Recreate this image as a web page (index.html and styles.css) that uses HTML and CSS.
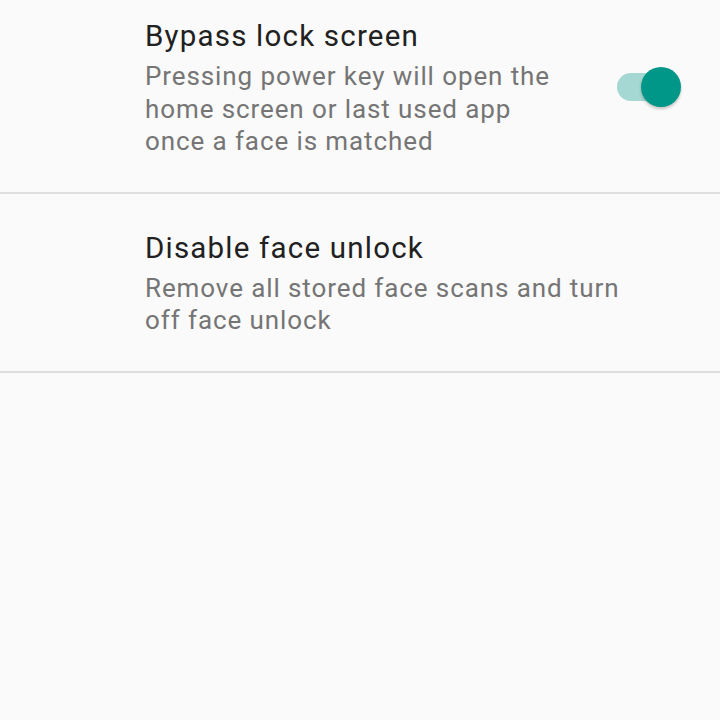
FILE: index.html
```html
<!DOCTYPE html>
<html lang="en">
<head>
    <meta charset="UTF-8">
    <meta name="viewport" content="width=device-width, initial-scale=1.0">
    <title>Face unlock</title>
    <link rel="stylesheet" href="styles.css">
</head>
<body>
    <div class="settings">
        <div class="pref pref-first">
            <div class="pref-text">
                <div class="pref-title">Bypass lock screen</div>
                <div class="pref-summary">Pressing power key will open the home screen or last used app once a face is matched</div>
            </div>
            <div class="switch on">
                <div class="switch-track"></div>
                <div class="switch-thumb"></div>
            </div>
        </div>
        <div class="pref">
            <div class="pref-text">
                <div class="pref-title">Disable face unlock</div>
                <div class="pref-summary">Remove all stored face scans and turn off face unlock</div>
            </div>
        </div>
    </div>
</body>
</html>
```

FILE: styles.css
```css
body {
    margin: 0;
    background-color: #fafafa;
    font-family: 'Roboto', 'Noto Sans', sans-serif;
    height: 100vh;
    overflow: hidden;
}

.settings {
    display: flex;
    flex-direction: column;
}

.pref {
    display: flex;
    align-items: center;
    padding: 34px 39px 34px 145px;
    border-bottom: 2px solid #dedede;
}

.pref-first {
    padding-top: 16px;
}

.pref-text {
    flex: 1;
    max-width: 500px;
}

.pref-title {
    font-size: 29.5px;
    line-height: 40px;
    letter-spacing: 1.2px;
    color: #212121;
    margin-bottom: 4px;
}

.pref-summary {
    font-size: 26px;
    line-height: 32.5px;
    letter-spacing: 0.9px;
    color: #757575;
}

.switch {
    position: relative;
    width: 64px;
    height: 40px;
    margin-left: 52px;
}

.switch-track {
    position: absolute;
    left: 0;
    top: 6px;
    width: 56px;
    height: 28px;
    border-radius: 14px;
    background-color: #a5d8d2;
}

.switch-thumb {
    position: absolute;
    right: 0;
    top: 0;
    width: 40px;
    height: 40px;
    border-radius: 50%;
    background-color: #009688;
    box-shadow: 0 2px 3px rgba(0, 0, 0, 0.22);
}
```
